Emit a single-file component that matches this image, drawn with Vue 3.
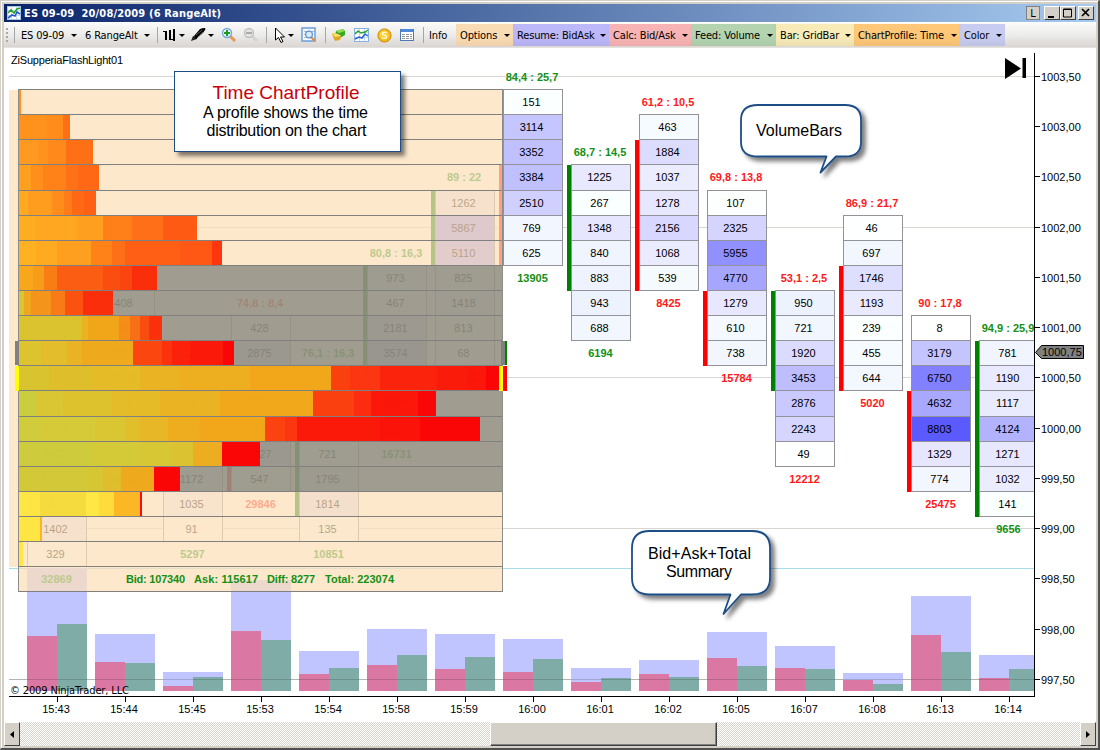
<script setup>
const COL_WIDTH = 60
const BASE_Y = 691

// top edge of a price level, one level is a quarter point
const rowY = (k) => Math.round(89.04 + 25.12 * k)
const colX = (i) => 27 + 68 * i

const priceLabels = Array.from({length: 13}, (_, k) => ({
  text: (1003.5 - k * 0.5).toFixed(2).replace('.', ','),
  y: Math.round(76 + 50.24 * k),
  grid: k % 3 === 0
}))

// vol: top of total, bid and ask bars
const bars = [
  {time: '15:43', start: 12, head: '75 : 9,2', up: true, cells: [1374, 7036, 9262, 5322, 5657, 1402, 329], total: 32869, vol: [568, 636, 624]},
  {time: '15:44', start: 8, head: '71,4 : 9,6', up: false, cells: [408, 1430, 2197, 2197, 734, 928, 612], total: 15410, vol: [634, 662, 663]},
  {time: '15:45', start: 11, head: '60,2 : 8,3', up: true, cells: [981, 1081, 643, 575, 1172, 1035, 91], total: 5297, vol: [672, 686, 677]},
  {time: '15:53', start: 9, head: '74,8 : 8,4', up: false, cells: [428, 2875, 5212, 7730, 6840, 2527, 547], total: 29846, vol: [580, 631, 640], mark: [15, 16, false]},
  {time: '15:54', start: 11, head: '76,1 : 16,3', up: true, cells: [1310, 2240, 1836, 721, 1795, 1814, 135], total: 10851, vol: [651, 674, 668], mark: [14, 17, true]},
  {time: '15:58', start: 7, head: '80,8 : 16,3', up: true, cells: [973, 467, 2181, 3574, 4120, 3200, 2216], total: 16731, vol: [629, 665, 655], mark: [7, 11, true]},
  {time: '15:59', start: 4, head: '89 : 22', up: true, cells: [1262, 5867, 5110, 825, 1418, 813, 68], total: 15363, vol: [634, 669, 657], mark: [4, 7, true]},
  {time: '16:00', start: 0, head: '84,4 : 25,7', up: true, cells: [151, 3114, 3352, 3384, 2510, 769, 625], total: 13905, vol: [639, 672, 659], mark: [3, 7, false]},
  {time: '16:01', start: 3, head: '68,7 : 14,5', up: true, cells: [1225, 267, 1348, 840, 883, 943, 688], total: 6194, vol: [668, 682, 678], mark: [3, 8, true]},
  {time: '16:02', start: 1, head: '61,2 : 10,5', up: false, cells: [463, 1884, 1037, 1278, 2156, 1068, 539], total: 8425, vol: [660, 674, 677], mark: [2, 8, false]},
  {time: '16:05', start: 4, head: '69,8 : 13,8', up: false, cells: [107, 2325, 5955, 4770, 1279, 610, 738], total: 15784, vol: [632, 658, 666], mark: [8, 11, false]},
  {time: '16:07', start: 8, head: '53,1 : 2,5', up: false, cells: [950, 721, 1920, 3453, 2876, 2243, 49], total: 12212, vol: [646, 668, 669], mark: [8, 12, true]},
  {time: '16:08', start: 5, head: '86,9 : 21,7', up: false, cells: [46, 697, 1746, 1193, 239, 455, 644], total: 5020, vol: [673, 680, 684], mark: [7, 12, false]},
  {time: '16:13', start: 9, head: '90 : 17,8', up: false, cells: [8, 3179, 6750, 4632, 8803, 1329, 774], total: 25475, vol: [596, 635, 652], mark: [12, 16, false]},
  {time: '16:14', start: 10, head: '94,9 : 25,9', up: true, cells: [781, 1190, 1117, 4124, 1271, 1032, 141], total: 9656, vol: [655, 678, 669], mark: [10, 17, true]}
]

const shade = (v) => {
  const c = Math.max(90, Math.round(255 - v * 0.0187))
  return `rgb(${c}, ${Math.min(255, c + (v < 1000 ? 5 : 0))}, 255)`
}

// end of the bar, then [from, colour] steps
const profile = [
  {end: 21, steps: [[19, '#ff8c14']]},
  {end: 70, steps: [[19, '#ff8e16'], [46, '#ff8814'], [63, '#ff6a0e']]},
  {end: 93, steps: [[19, '#ff9618'], [38, '#ff8e16'], [48, '#ff8614'], [66, '#ff6a0e']]},
  {end: 99, steps: [[19, '#ff9c18'], [31, '#ff8a14'], [43, '#ff7e12'], [66, '#ff6c10'], [78, '#ff640e']]},
  {end: 96, steps: [[19, '#ffa81a'], [28, '#ff9a18'], [52, '#ff8814'], [64, '#ff7812'], [72, '#ff640e'], [84, '#ff5c0c']]},
  {end: 197, steps: [[19, '#ffac1a'], [35, '#ffa41a'], [77, '#ff9c18'], [103, '#ff7c12'], [132, '#ff6a10'], [163, '#ff540c']]},
  {end: 222, steps: [[19, '#ffb01a'], [36, '#ffa81a'], [57, '#ff9c18'], [91, '#ff7e12'], [112, '#ff6a10'], [125, '#ff5a0c'], [180, '#ff520c'], [212, '#ff2e06']]},
  {end: 157, steps: [[19, '#fca816'], [33, '#fa9c14'], [44, '#fc7c10'], [57, '#ff5c0c'], [103, '#ff4a0a'], [120, '#ff420a'], [132, '#ff2a06']]},
  {end: 113, steps: [[19, '#dcc82e'], [24, '#f2a81a'], [31, '#f89416'], [51, '#fc7a12'], [65, '#ff5009'], [83, '#ff2a06']]},
  {end: 162, steps: [[19, '#dec52c'], [82, '#ecb41c'], [88, '#f5a614'], [119, '#f98c14'], [130, '#fb6e10'], [140, '#fd4a0a'], [149, '#ff2c06']]},
  {end: 234, steps: [[19, '#e0c62a'], [41, '#e6be26'], [67, '#ecb420'], [82, '#f3aa18'], [133, '#ff4409'], [162, '#ff2e06'], [172, '#ff1c04'], [190, '#ff1404'], [223, '#ff0000']]},
  {end: 503, steps: [[19, '#dcc62c'], [49, '#e2c028'], [91, '#e8bc22'], [140, '#edb41e'], [180, '#f0b01a'], [250, '#f5a814'], [331, '#ff3c0a'], [350, '#ff320a'], [380, '#ff1e05'], [437, '#ff1604'], [467, '#ff1203'], [486, '#ff0000']]},
  {end: 436, steps: [[19, '#cccf3a'], [35, '#dcc82e'], [63, '#e0c42a'], [112, '#e8bc22'], [160, '#edb41e'], [220, '#f5aa16'], [313, '#ff3c0a'], [354, '#ff280a'], [371, '#ff1203'], [418, '#ff0000']]},
  {end: 480, steps: [[19, '#d2ce38'], [41, '#dacc34'], [95, '#dcc82e'], [125, '#e4c026'], [140, '#eab822'], [168, '#f0ae1a'], [200, '#f5a814'], [265, '#ff3e0a'], [285, '#ff320a'], [297, '#ff1404'], [380, '#ff0e03'], [420, '#ff0000']]},
  {end: 260, steps: [[19, '#d0ce38'], [92, '#d6cc34'], [140, '#dac930'], [172, '#dec42c'], [193, '#f0ae1c'], [222, '#ff0000']]},
  {end: 180, steps: [[19, '#d4ca34'], [88, '#d8c830'], [103, '#e2be28'], [121, '#f2aa18'], [154, '#ff0000']]},
  {end: 142, steps: [[19, '#ffe63e'], [40, '#f6dc38'], [86, '#ffe740'], [99, '#ffdc36'], [114, '#fcb520'], [140, '#ff0000']]},
  {end: 42, steps: [[19, '#ffe640'], [40, '#f8b420']]},
  {end: 23, steps: [[19, '#ffe640']]}
]

const segments = profile.flatMap((p, k) => p.steps.map(([x, fill], n) => ({
  x,
  fill,
  y: rowY(k) + 1,
  w: (p.steps[n + 1]?.[0] ?? p.end) - x,
  h: rowY(k + 1) - rowY(k) - 1
})))

const menus = [
  {text: 'Options', cls: 'options'},
  {text: 'Resume: BidAsk', cls: 'resume'},
  {text: 'Calc: Bid/Ask', cls: 'calc'},
  {text: 'Feed: Volume', cls: 'feed'},
  {text: 'Bar: GridBar', cls: 'bar'},
  {text: 'ChartProfile: Time', cls: 'profile'},
  {text: 'Color', cls: 'color'}
]
</script>

<template>
  <div class="window">
    <header class="title">
      <svg class="title__icon" width="14" height="14" viewBox="0 0 14 14">
        <rect x=".5" y=".5" width="13" height="13" fill="#fff" stroke="#a8c8e8"/>
        <path d="M1 4.5h12M1 9.5h12M4.5 1v12M9.5 1v12" stroke="#c6dcf2"/>
        <path d="M1 7l3-3 3 3 3-4 3-1" fill="none" stroke="#28a428" stroke-width="1.6"/>
        <path d="M1 12l4-3 3 1 2-4 3 2" fill="none" stroke="#2858c8" stroke-width="1.6"/>
      </svg>
      <span class="title__text">ES 09-09&nbsp; 20/08/2009 (6 RangeAlt)</span>
      <div class="title__buttons">
        <button class="flat">L</button>
        <button class="min"><svg width="14" height="12"><path d="M3 9h6v2H3z"/></svg></button>
        <button class="max"><svg width="14" height="12"><path d="M2.500 2h8v8h-8zM2 2.500h9" fill="none" stroke="#000"/></svg></button>
        <button class="close"><svg width="14" height="12"><path d="M3 2l7 7M10 2l-7 7" stroke="#000" stroke-width="1.700"/></svg></button>
      </div>
    </header>

    <nav class="toolbar">
      <i class="grip"></i>
      <i class="sep"></i>
      <span class="tool tool--symbol">ES 09-09 <i class="arrow"></i></span>
      <span class="tool tool--range">6 RangeAlt <i class="arrow"></i></span>
      <i class="sep"></i>
      <span class="tool tool--bars">
        <svg width="13" height="16" viewBox="0 0 13 16"><path d="M2 4h2v9H2zM6 3h2v10H6zM10 2h2v12h-2zM0 4h2v1H0zM8 12h2v1H8z"/></svg>
        <i class="arrow"></i>
      </span>
      <span class="tool tool--pen">
        <svg width="17" height="16" viewBox="0 0 17 16">
          <path d="M1 14l2-5 3 1 1 2z" fill="#222"/>
          <path d="M4 9l6-7q2-1 5-1 1 1 0 2l-2 3-7 6z" fill="#000"/>
          <path d="M6 8l6-5M8 10l5-5" stroke="#777" stroke-width=".8"/>
        </svg>
        <i class="arrow"></i>
      </span>
      <span class="tool tool--zoom">
        <svg width="16" height="16" viewBox="0 0 16 16">
          <path d="M9 9l5 5" stroke="#e8984c" stroke-width="3"/>
          <circle cx="6" cy="6" r="4.500" fill="#e6f4ff" stroke="#74a8dc" stroke-width="1.400"/>
          <path d="M6 3v6M3 6h6" stroke="#18a018" stroke-width="2"/>
        </svg>
      </span>
      <span class="tool tool--zoom">
        <svg width="16" height="16" viewBox="0 0 16 16">
          <path d="M9 9l5 5" stroke="#d4d4d4" stroke-width="3"/>
          <circle cx="6" cy="6" r="4.500" fill="#e4e4e4" stroke="#c0c0c0" stroke-width="1.400"/>
          <path d="M3 6h6" stroke="#aaa" stroke-width="2"/>
        </svg>
      </span>
      <i class="sep sep--cursor"></i>
      <span class="tool tool--cursor">
        <svg width="12" height="17" viewBox="0 0 12 17"><path d="M1.500 1v12l3-2.500 2.500 5 2-1-2.500-4.500h4z" fill="#fff" stroke="#000"/></svg>
        <i class="arrow"></i>
      </span>
      <span class="tool tool--find">
        <svg width="16" height="16" viewBox="0 0 16 16">
          <rect x="1" y="1" width="13" height="13" fill="#f4f9ff" stroke="#74a4dc" stroke-width="1.600"/>
          <path d="M3 4.500h3M3 7.500h2M3 10.500h3M11 4.500h2" stroke="#b0b8c4"/>
          <path d="M10 10l4 4" stroke="#e0883c" stroke-width="2"/>
          <circle cx="8" cy="7.500" r="3.400" fill="#d8ecff" stroke="#5c90c8" stroke-width="1.200"/>
        </svg>
      </span>
      <i class="sep sep--find"></i>
      <span class="tool tool--icon">
        <svg width="15" height="14" viewBox="0 0 15 14">
          <path d="M5 3l7-2 2 2v4l-5 3-5-2z" fill="#3aa824"/>
          <path d="M5 3l7-2 2 2-6 2z" fill="#90dc58"/>
          <path d="M1 5l6 1 3 2-1 4-5 1-2-4z" fill="#e0a820"/>
          <path d="M1 5l6 1 3 2-6 1z" fill="#ffe068"/>
        </svg>
      </span>
      <span class="tool tool--icon">
        <svg width="15" height="14" viewBox="0 0 15 14">
          <rect x=".5" y=".5" width="14" height="13" fill="#fff" stroke="#88b0e4"/>
          <path d="M1 4.500h13M1 9.500h13M5.500 1v12M10.500 1v12" stroke="#c0d8f0"/>
          <path d="M1 6l3-3 3 2 4-1 3-2" fill="none" stroke="#28a428" stroke-width="1.500"/>
          <path d="M1 11l4-2 3 1 3-4 3 2" fill="none" stroke="#2860d0" stroke-width="1.500"/>
        </svg>
      </span>
      <span class="tool tool--icon">
        <svg width="15" height="15" viewBox="0 0 15 15">
          <circle cx="7.500" cy="7.500" r="6.600" fill="#f4b81c" stroke="#c88c10"/>
          <circle cx="7" cy="7" r="4.600" fill="#ffd038"/>
          <path d="M9.500 5q-2-1.500-4 0-.8 1.700 2 2.400 2.700.8 1.800 2.300-2 1.400-4.300 0" fill="none" stroke="#fffbe0" stroke-width="1.300"/>
        </svg>
      </span>
      <span class="tool tool--icon">
        <svg width="15" height="14" viewBox="0 0 15 14">
          <rect x=".5" y="1.500" width="13" height="11" fill="#fff" stroke="#5078b8"/>
          <path d="M1 1h12v3H1z" fill="#4c88dc"/>
          <path d="M2 6.500h3M6 6.500h3M10 6.500h2M2 8.500h3M6 8.500h3M10 8.500h2M2 10.500h3M6 10.500h3M10 10.500h2" stroke="#90989c"/>
        </svg>
      </span>
      <i class="sep sep--info"></i>
      <span class="tool tool--info">Info</span>
      <span v-for="menu in menus" :key="menu.cls" :class="'menu--' + menu.cls" class="menu">
        {{ menu.text }} <i class="arrow"></i>
      </span>
    </nav>

    <svg class="chart" width="1092" height="674" viewBox="4 48 1092 674">
      <defs>
        <clipPath id="plot"><rect x="9" y="48" width="1025" height="648"/></clipPath>
        <filter id="shadow" x="-10%" y="-20%" width="130%" height="150%">
          <feDropShadow dx="4" dy="4" stdDeviation="2" flood-color="#000" flood-opacity=".5"/>
        </filter>
      </defs>

      <g clip-path="url(#plot)" shape-rendering="crispEdges">
        <template v-for="p in priceLabels" :key="p.text">
          <rect v-if="p.grid" x="9" :y="p.y" width="1025" height="1" fill="#d8d6d0"/>
        </template>
        <rect x="9" y="568" width="1025" height="1" fill="#a8dcea"/>

        <g v-for="(bar, i) in bars" :key="bar.time">
          <rect :x="colX(i)" :y="bar.vol[0]" :width="COL_WIDTH" :height="BASE_Y - bar.vol[0]" fill="#c0c5ff"/>
          <rect :x="colX(i)" :y="bar.vol[1]" width="30" :height="BASE_Y - bar.vol[1]" fill="#da78a3"/>
          <rect :x="colX(i) + 30" :y="bar.vol[2]" width="30" :height="BASE_Y - bar.vol[2]" fill="#80aca7"/>

          <text class="mark" :class="{up: bar.up}" :x="colX(i) + 29" :y="rowY(bar.start - 1) + 17">{{ bar.head }}</text>
          <g v-for="(v, n) in bar.cells" :key="n">
            <rect
              :x="colX(i) + 0.5" :y="rowY(bar.start + n) + 0.5"
              width="59" :height="rowY(bar.start + n + 1) - rowY(bar.start + n)"
              :fill="shade(v)" stroke="#929298"
            />
            <text class="cell" :x="colX(i) + 28.500" :y="rowY(bar.start + n) + 17">{{ v }}</text>
          </g>
          <text class="mark" :class="{up: bar.up}" :x="colX(i) + 29.500" :y="rowY(bar.start + 7) + 17">{{ bar.total }}</text>
          <rect
            v-if="bar.mark"
            :x="colX(i) - 4" :y="rowY(bar.mark[0]) + 1"
            width="4" :height="rowY(bar.mark[1]) - rowY(bar.mark[0])"
            :fill="bar.mark[2] ? '#008000' : '#ff0000'"
          />
        </g>
        <rect x="9" y="679" width="1025" height="1" fill="#000" opacity=".16"/>
      </g>

      <!-- time profile over the left part -->
      <g shape-rendering="crispEdges">
        <rect x="9" y="90" width="9" height="477" fill="#fde8cc"/>
        <rect x="18" y="89" width="485" height="502" fill="#fcdfb8" opacity=".72"/>
        <rect x="18" :y="rowY(7)" width="485" :height="rowY(16) - rowY(7)" fill="#676f6b" opacity=".62"/>
        <rect
          v-for="(s, n) in segments" :key="n"
          :x="s.x" :y="s.y" :width="s.w" :height="s.h" :fill="s.fill" opacity=".96"
        />
        <rect v-for="k in 21" :key="k" x="18" :y="rowY(k - 1)" width="485" height="1" fill="#808080"/>
        <rect x="18" y="89" width="1" height="503" fill="#8c8c88"/>
        <rect x="502" y="89" width="1" height="503" fill="#8c8c88"/>
        <rect x="15" y="341" width="4" height="24" fill="#808080"/>
        <rect x="15" y="366" width="4" height="25" fill="#ffff00"/>
        <rect x="501" y="341" width="4" height="24" fill="#808080"/>
        <rect x="505" y="341" width="2" height="24" fill="#008000"/>
        <rect x="499" y="366" width="4" height="25" fill="#ffff00"/>
        <rect x="503" y="366" width="4" height="25" fill="#ff0000"/>
      </g>
      <g class="mark up sum">
        <text x="126" y="583" textLength="59">Bid: 107340</text>
        <text x="194" y="583" textLength="64">Ask: 115617</text>
        <text x="267" y="583" textLength="48">Diff: 8277</text>
        <text x="325" y="583" textLength="69">Total: 223074</text>
      </g>

      <!-- axes -->
      <g shape-rendering="crispEdges">
        <rect x="1034" y="53" width="1" height="644"/>
        <rect x="9" y="696" width="1026" height="1"/>
        <rect v-for="p in priceLabels" :key="p.text" x="1035" :y="p.y" width="5" height="1"/>
        <rect v-for="(bar, i) in bars" :key="bar.time" :x="colX(i) + 30" y="697" width="1" height="5"/>
      </g>
      <text v-for="p in priceLabels" :key="p.text" class="label" x="1041" :y="p.y + 5">{{ p.text }}</text>
      <text v-for="(bar, i) in bars" :key="bar.time" class="cell" :x="colX(i) + 29" y="713">{{ bar.time }}</text>
      <path d="M1035.500 352.500l6-7h42v13h-42z" fill="#808080" stroke="#000"/>
      <text class="label" x="1042" y="356">1000,75</text>

      <path d="M1005 58l16 10.500-16 10.500zM1022.500 58h3.500v20h-3.500z"/>
      <text class="label" x="11" y="64" textLength="112">ZiSupperiaFlashLight01</text>
      <text class="label copy" x="10" y="694" textLength="119">© 2009 NinjaTrader, LLC</text>

      <!-- callouts -->
      <rect x="174.500" y="71.500" width="226" height="80" fill="#fff" stroke="#1f4e86" filter="url(#shadow)"/>
      <g class="note">
        <text class="note__title" x="286" y="99" textLength="147">Time ChartProfile</text>
        <text x="285.500" y="118" textLength="165">A profile shows the time</text>
        <text x="286.500" y="136" textLength="160">distribution on the chart</text>
      </g>
      <g fill="#fff" stroke="#1f4e86" stroke-width="1.800" stroke-linejoin="round">
        <path filter="url(#shadow)" d="M758 105h87q16 0 16 15v22q0 14.500-16 14.500h-9L820.500 172.500l6-16H758q-17 0-17-14.500v-22q0-15 17-15z"/>
        <path filter="url(#shadow)" d="M650 531h102q18 0 18 17v30q0 16.500-18 16.500h-11L723.500 614l7-19.500H650q-18 0-18-16.500v-30q0-17 18-17z"/>
      </g>
      <g class="note">
        <text x="799" y="136" textLength="86">VolumeBars</text>
        <text x="699.500" y="559" textLength="103">Bid+Ask+Total</text>
        <text x="699" y="577" textLength="66">Summary</text>
      </g>
    </svg>

    <footer class="scroll">
      <button class="scroll__btn"><svg width="5" height="7"><path d="M4 0v7L0 3.500z"/></svg></button>
      <div class="scroll__track"><div class="scroll__thumb"></div></div>
      <button class="scroll__btn"><svg width="5" height="7"><path d="M0 0v7l4-3.500z"/></svg></button>
    </footer>
  </div>
</template>

<style>
body {
  background: #d4d0c8;
}
</style>

<style scoped>
.window {
  box-sizing: border-box;
  display: flex;
  flex-direction: column;
  width: 1100px;
  height: 750px;
  padding: 3px 2px 2px 3px;
  background: #fff;
  border: 1px solid #d4d0c8;
  border-right: 2px solid #505050;
  border-bottom: 2px solid #505050;
  box-shadow: inset 1px 1px 0 #fff, inset -2px -2px 0 #d4d0c8, inset 3px 3px 0 #d4d0c8;
  overflow: hidden;
  font: 11px 'DejaVu Sans Condensed', 'DejaVu Sans', sans-serif;
  color: #000;
}

.title {
  display: flex;
  align-items: center;
  flex: none;
  height: 18px;
  padding: 0 2px 0 3px;
  background: linear-gradient(90deg, #0a246a, #a6caf0);
}

.title__text {
  margin-left: 3px;
  font-weight: bold;
  font-size: 11px;
  letter-spacing: .16px;
  color: #fff;
  white-space: nowrap;
}

.title__buttons {
  display: flex;
  margin-left: auto;
}

.title__buttons button {
  display: flex;
  box-sizing: border-box;
  width: 16px;
  height: 14px;
  padding: 0;
  background: #d4d0c8;
  border: 1px solid;
  border-color: #fff #404040 #404040 #fff;
}

.title__buttons .flat {
  justify-content: center;
  align-items: center;
  width: 14px;
  margin-right: 4px;
  border-color: #808080;
  font: 11px 'DejaVu Sans Condensed', sans-serif;
}

.title__buttons .close {
  margin-left: 2px;
}

.toolbar {
  display: flex;
  align-items: center;
  flex: none;
  height: 25px;
  margin-top: 1px;
  padding: 1px 0 1px 2px;
  box-sizing: border-box;
  background: linear-gradient(#fafafa, #ececea 50%, #d9d5d2);
  border-bottom: 1px solid #e4e2de;
  letter-spacing: -.15px;
  white-space: nowrap;
}

.grip {
  width: 2px;
  height: 14px;
  margin-right: 6px;
  background: repeating-linear-gradient(#a8a8a4 0 2px, transparent 2px 4px);
}

.sep {
  flex: none;
  width: 1px;
  height: 16px;
  background: #a6a6a6;
}

.arrow {
  flex: none;
  border: 3px solid transparent;
  border-top-color: #000;
  border-bottom: 0;
}

.tool {
  flex: none;
  display: flex;
  align-items: center;
  justify-content: space-between;
  box-sizing: border-box;
}

.tool--symbol {
  width: 62px;
  padding: 0 0 0 6px;
  margin-right: 8px;
}

.tool--range {
  width: 65px;
  margin-right: 7px;
}

.tool--bars {
  width: 22px;
  margin-left: 5px;
}

.tool--pen {
  width: 24px;
  margin: 0 7px 0 5px;
}

.tool--zoom {
  width: 22px;
}

.sep--cursor {
  margin: 0 7px 0 1px;
}

.tool--cursor {
  width: 20px;
}

.tool--find {
  width: 16px;
  margin: 0 8px 0 7px;
}

.sep--find {
  margin-right: 5px;
}

.tool--icon {
  width: 23px;
}

.sep--info {
  margin-right: 5px;
}

.tool--info {
  width: 27px;
}

.menu {
  display: flex;
  flex: none;
  align-items: center;
  justify-content: space-between;
  box-sizing: border-box;
  height: 22px;
  padding: 0 3px 0 4px;
  box-shadow: inset 0 -8px 8px -4px rgba(0, 0, 0, .06);
}

.menu--options {
  width: 57px;
  background: #fadcb4;
}

.menu--resume {
  width: 96px;
  background: #bcb8fa;
}

.menu--calc {
  width: 82px;
  background: #f8b4b4;
}

.menu--feed {
  width: 85px;
  background: #b4d4b0;
}

.menu--bar {
  width: 78px;
  background: #f8ebb8;
}

.menu--profile {
  width: 106px;
  background: #fec878;
}

.menu--color {
  width: 45px;
  background: #c8ccf0;
}

.chart {
  display: block;
  flex: none;
  background: #fff;
  font-family: 'Liberation Sans', Arial, sans-serif;
  font-size: 11px;
}

.cell {
  text-anchor: middle;
}

.mark {
  text-anchor: middle;
  font-weight: bold;
  fill: #ff1a1a;
}

.mark.up {
  fill: #149014;
}

.sum {
  text-anchor: start;
}

.copy {
  font-family: 'DejaVu Sans Condensed', sans-serif;
}

.note {
  text-anchor: middle;
  font-size: 16px;
}

.note__title {
  font-size: 19px;
  fill: #c8000c;
}

.scroll {
  display: flex;
  flex: none;
  height: 24px;
}

.scroll__btn {
  display: flex;
  align-items: center;
  justify-content: center;
  box-sizing: border-box;
  width: 16px;
  padding: 0;
  background: #d4d0c8;
  border: 1px solid;
  border-color: #fff #404040 #404040 #fff;
}

.scroll__track {
  flex: 1;
  padding-left: 470px;
  background: repeating-conic-gradient(#d8d5ce 0 25%, #fff 0 50%) 0 0 / 2px 2px;
}

.scroll__thumb {
  box-sizing: border-box;
  width: 227px;
  height: 24px;
  background: #d4d0c8;
  border: 1px solid;
  border-color: #fff #404040 #404040 #fff;
  box-shadow: inset -1px -1px 0 #808080;
}
</style>
